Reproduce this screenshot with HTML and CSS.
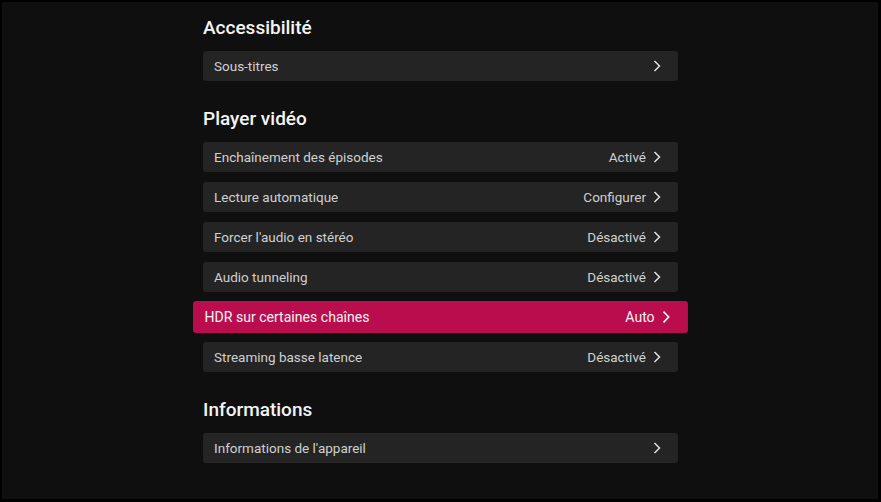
FILE: index.html
```html
<!DOCTYPE html>
<html lang="fr">
<head>
<meta charset="utf-8">
<link rel="stylesheet" href="styles.css">
</head>
<body>
<div class="screen">
  <main class="column">
    <section class="group">
      <h2 class="heading">Accessibilité</h2>
      <div class="row"><span class="label">Sous-titres</span><span class="value"><svg class="chev" viewBox="0 0 8 12"><polyline points="1.5,1 6.5,6 1.5,11"/></svg></span></div>
    </section>
    <section class="group">
      <h2 class="heading">Player vidéo</h2>
      <div class="row"><span class="label">Enchaînement des épisodes</span><span class="value">Activé<svg class="chev" viewBox="0 0 8 12"><polyline points="1.5,1 6.5,6 1.5,11"/></svg></span></div>
      <div class="row"><span class="label">Lecture automatique</span><span class="value">Configurer<svg class="chev" viewBox="0 0 8 12"><polyline points="1.5,1 6.5,6 1.5,11"/></svg></span></div>
      <div class="row"><span class="label">Forcer l'audio en stéréo</span><span class="value">Désactivé<svg class="chev" viewBox="0 0 8 12"><polyline points="1.5,1 6.5,6 1.5,11"/></svg></span></div>
      <div class="row"><span class="label">Audio tunneling</span><span class="value">Désactivé<svg class="chev" viewBox="0 0 8 12"><polyline points="1.5,1 6.5,6 1.5,11"/></svg></span></div>
      <div class="row focused"><span class="label">HDR sur certaines chaînes</span><span class="value">Auto<svg class="chev" viewBox="0 0 8 12"><polyline points="1.5,1 6.5,6 1.5,11"/></svg></span></div>
      <div class="row"><span class="label">Streaming basse latence</span><span class="value">Désactivé<svg class="chev" viewBox="0 0 8 12"><polyline points="1.5,1 6.5,6 1.5,11"/></svg></span></div>
    </section>
    <section class="group">
      <h2 class="heading">Informations</h2>
      <div class="row"><span class="label">Informations de l'appareil</span><span class="value"><svg class="chev" viewBox="0 0 8 12"><polyline points="1.5,1 6.5,6 1.5,11"/></svg></span></div>
    </section>
  </main>
</div>
</body>
</html>
```
FILE: styles.css
```css
* { box-sizing: border-box; }
html, body { margin: 0; height: 100%; }
body {
  background: #000;
  padding: 2px 3px 3px 2px;
  font-family: Roboto, "Noto Sans", "Liberation Sans", sans-serif;
}
.screen {
  height: 100%;
  background: #0f0f0f;
  display: flex;
  justify-content: center;
}
.column {
  width: 475px;
  display: flex;
  flex-direction: column;
  padding-top: 14px;
  margin-left: 1px;
}
.group {
  display: flex;
  flex-direction: column;
  gap: 10px;
  margin-bottom: 26px;
}
.heading {
  margin: 0 0 1px 0;
  height: 24px;
  line-height: 24px;
  font-size: 19px;
  font-weight: 500;
  color: #f4f4f4;
}
.row {
  height: 30px;
  border-radius: 3px;
  background: #242424;
  display: flex;
  align-items: center;
  justify-content: space-between;
  padding: 0 17px 0 11px;
  font-size: 13.5px;
  color: #d0d0d0;
}
.value {
  display: flex;
  align-items: center;
  gap: 7px;
}
.chev {
  width: 8px;
  height: 12px;
  fill: none;
  stroke: #e0e0e0;
  stroke-width: 1.5;
}
.focused {
  background: #ba0d4e;
  color: #f4f4f4;
  transform: scale(1.042, 1.067);
  border-radius: 3px;
}
.focused .chev { stroke: #ffffff; }
```
